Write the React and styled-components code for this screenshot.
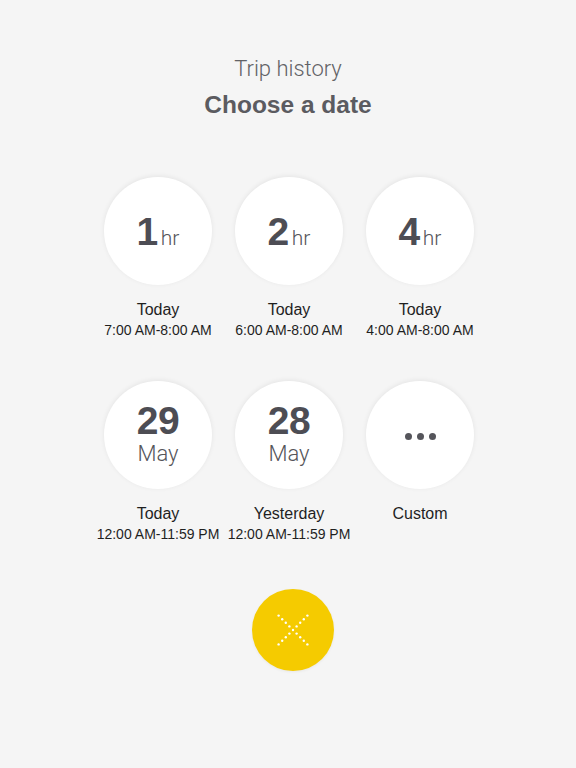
import React from 'react';
import styled, { createGlobalStyle } from 'styled-components';

const GlobalStyle = createGlobalStyle`
  html, body {
    margin: 0;
    padding: 0;
    background: #f5f5f5;
  }
  body {
    font-family: "Liberation Sans", Arial, sans-serif;
  }
`;

const Page = styled.div`
  width: 576px;
  height: 768px;
  background: #f5f5f5;
  display: flex;
  flex-direction: column;
  align-items: center;
  padding-top: 55px;
  box-sizing: border-box;
`;

const Header = styled.div`
  display: flex;
  flex-direction: column;
  align-items: center;
  margin-bottom: 57px;
`;

const Subtitle = styled.div`
  font-family: Roboto, "Liberation Sans", sans-serif;
  font-weight: 300;
  font-size: 22px;
  line-height: 28px;
  color: #626266;
  margin-bottom: 7px;
`;

const Title = styled.h1`
  margin: 0;
  font-size: 24.5px;
  line-height: 30px;
  font-weight: bold;
  color: #5b5b60;
`;

const Grid = styled.div`
  display: grid;
  grid-template-columns: repeat(3, 131px);
  row-gap: 40px;
  margin-left: 2px;
`;

const Option = styled.div`
  display: flex;
  flex-direction: column;
  align-items: center;
  cursor: pointer;
`;

const Circle = styled.div`
  width: 108px;
  height: 108px;
  border-radius: 50%;
  background: #fff;
  box-shadow: 0 -1px 5px rgba(0, 0, 0, 0.07);
  display: flex;
  flex-direction: ${p => (p.$stack ? 'column' : 'row')};
  align-items: ${p => (p.$stack ? 'center' : 'baseline')};
  justify-content: center;
  box-sizing: border-box;
  padding-top: ${p => (p.$stack ? '0' : '2px')};
  margin-bottom: 15px;
  ${p => !p.$stack && 'align-content: center; flex-wrap: wrap;'}
`;

const Big = styled.span`
  font-size: 39px;
  font-weight: bold;
  color: #4d4d54;
  line-height: 36px;
  letter-spacing: -0.5px;
`;

const Unit = styled.span`
  font-family: Roboto, "Liberation Sans", sans-serif;
  font-weight: 300;
  font-size: 21px;
  color: #55555a;
  margin-left: 3px;
`;

const Month = styled.span`
  font-family: Roboto, "Liberation Sans", sans-serif;
  font-weight: 300;
  font-size: 22px;
  line-height: 26px;
  color: #55555a;
  margin-top: 2px;
`;

const Dots = styled.div`
  display: flex;
  gap: 5px;
  margin-top: 2px;
`;

const Dot = styled.span`
  width: 7px;
  height: 7px;
  border-radius: 50%;
  background: #55555b;
`;

const Label = styled.div`
  font-size: 16px;
  line-height: 20px;
  color: #1f1f1f;
`;

const Time = styled.div`
  font-size: 14px;
  line-height: 21px;
  color: #1f1f1f;
  white-space: nowrap;
`;

const CloseButton = styled.button`
  margin-top: 44px;
  margin-left: 10px;
  width: 82px;
  height: 82px;
  border-radius: 50%;
  border: none;
  background: #f5cb00;
  display: flex;
  align-items: center;
  justify-content: center;
  padding: 0;
  cursor: pointer;
  box-shadow: 0 1px 3px rgba(0, 0, 0, 0.06);
`;

const CrossDots = () => {
  const dots = [];
  for (let i = -4; i <= 4; i++) {
    dots.push(<circle key={'a' + i} cx={16 + i * 3.6} cy={16 + i * 3.6} r="1.2" fill="#fff" />);
    if (i !== 0) dots.push(<circle key={'b' + i} cx={16 + i * 3.6} cy={16 - i * 3.6} r="1.2" fill="#fff" />);
  }
  return (
    <svg width="32" height="32" viewBox="0 0 32 32">
      {dots}
    </svg>
  );
};

const hours = [
  { n: '1', time: '7:00 AM-8:00 AM' },
  { n: '2', time: '6:00 AM-8:00 AM' },
  { n: '4', time: '4:00 AM-8:00 AM' },
];

const App = () => {
  return (
    <Page>
      <GlobalStyle />
      <Header>
        <Subtitle>Trip history</Subtitle>
        <Title>Choose a date</Title>
      </Header>
      <Grid>
        {hours.map(h => (
          <Option key={h.n}>
            <Circle>
              <Big>{h.n}</Big>
              <Unit>hr</Unit>
            </Circle>
            <Label>Today</Label>
            <Time>{h.time}</Time>
          </Option>
        ))}
        <Option>
          <Circle $stack>
            <Big>29</Big>
            <Month>May</Month>
          </Circle>
          <Label>Today</Label>
          <Time>12:00 AM-11:59 PM</Time>
        </Option>
        <Option>
          <Circle $stack>
            <Big>28</Big>
            <Month>May</Month>
          </Circle>
          <Label>Yesterday</Label>
          <Time>12:00 AM-11:59 PM</Time>
        </Option>
        <Option>
          <Circle $stack>
            <Dots>
              <Dot />
              <Dot />
              <Dot />
            </Dots>
          </Circle>
          <Label>Custom</Label>
        </Option>
      </Grid>
      <CloseButton aria-label="Close">
        <CrossDots />
      </CloseButton>
    </Page>
  );
};

export default App;
